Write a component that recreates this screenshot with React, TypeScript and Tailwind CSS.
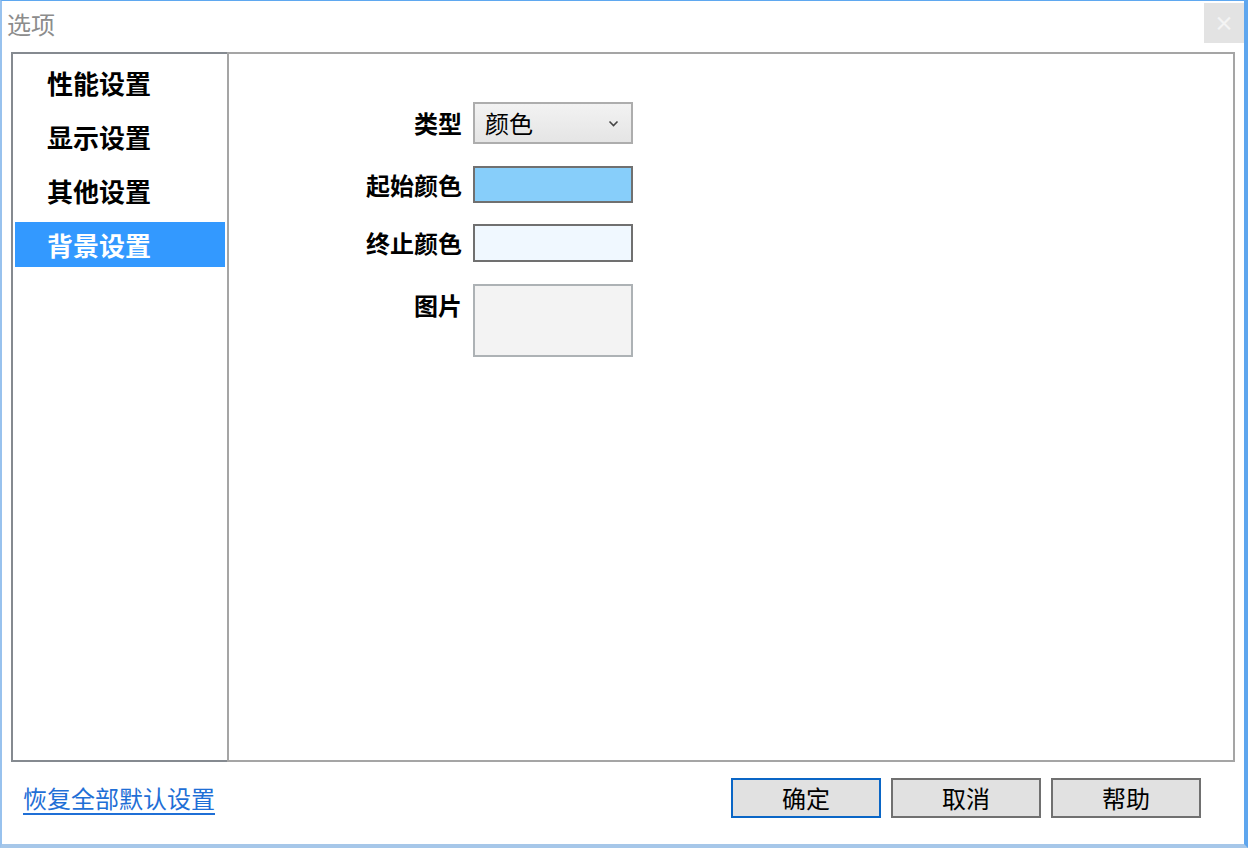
import { useState } from "react";

const font = { fontFamily: '"Noto Sans CJK SC", "Noto Sans", sans-serif' };

const navItems = ["性能设置", "显示设置", "其他设置", "背景设置"];

const Row = ({ label, top, children, alignTop }: { label: string; top: string; children: React.ReactNode; alignTop?: boolean }) => {
  return (
    <div className={`flex ${alignTop ? "items-start" : "items-center"} ${top}`}>
      <div
        className={`w-[233px] text-right text-[24px] font-bold leading-[30px] text-black ${alignTop ? "pt-[6px]" : ""}`}
      >
        {label}
      </div>
      <div className="ml-[11px]">{children}</div>
    </div>
  );
};

export default function App() {
  const [active, setActive] = useState(3);

  return (
    <div
      className="flex h-[848px] w-[1248px] flex-col border-t border-r-4 border-b-4 border-l-2 border-t-[#5fa8f0] border-r-[#5ea6ee] border-b-[#a6c7e9] border-l-[#98c2ee] bg-white"
      style={font}
    >
      {/* title bar */}
      <div className="flex h-[51px] shrink-0 items-start justify-between">
        <div className="pl-[5px] text-[24px] leading-[46px] text-[#8c8c8c]">选项</div>
        <div className="mt-[2px] flex h-[40px] w-[40px] items-center justify-center bg-[#e3e3e3] text-[20px] leading-none font-bold text-[#f4f4f4]">
          ×
        </div>
      </div>

      {/* main panel */}
      <div className="mx-[9px] flex h-[710px] shrink-0">
        <div className="flex w-[216px] flex-col gap-[9px] border-y-2 border-l-2 border-[#858a90] px-[2px] pt-[6px]">
          {navItems.map((item, i) => (
            <div
              key={item}
              onClick={() => setActive(i)}
              className={`flex h-[45px] items-center pl-[32px] text-[26px] font-bold ${
                active === i ? "bg-[#3399ff] text-white" : "text-black"
              }`}
            >
              {item}
            </div>
          ))}
        </div>

        <div className="flex flex-1 flex-col border-2 border-[#a5a5a5] pt-[48px]">
          <Row label="类型" top="">
            <div className="flex h-[42px] w-[160px] items-center justify-between border-2 border-[#adadad] bg-gradient-to-b from-[#f2f2f2] to-[#e5e5e5] pr-[12px] pl-[10px]">
              <span className="text-[24px] leading-none text-black">颜色</span>
              <svg width="11" height="7" viewBox="0 0 11 7" fill="none">
                <path d="M1.5 1.5 L5.5 5.5 L9.5 1.5" stroke="#444" strokeWidth="1.6" />
              </svg>
            </div>
          </Row>
          <Row label="起始颜色" top="mt-[22px]">
            <div className="h-[37px] w-[160px] border-2 border-[#707070] bg-[#87cefa]" />
          </Row>
          <Row label="终止颜色" top="mt-[21px]">
            <div className="h-[38px] w-[160px] border-2 border-[#707070] bg-[#f0f8ff]" />
          </Row>
          <Row label="图片" top="mt-[22px]" alignTop>
            <div className="h-[73px] w-[160px] border-2 border-[#adb2b5] bg-[#f3f3f3]" />
          </Row>
        </div>
      </div>

      {/* footer */}
      <div className="mt-[16px] flex h-[40px] items-center justify-between pr-[43px] pl-[21px]">
        <a className="text-[24px] leading-none text-[#1f6fd6] underline underline-offset-[5px]">恢复全部默认设置</a>
        <div className="flex gap-[10px]">
          <button className="h-[40px] w-[150px] border-2 border-[#0a66c6] bg-[#e1e1e1] text-[24px] leading-none text-black">
            确定
          </button>
          <button className="h-[40px] w-[150px] border-2 border-[#707070] bg-[#e1e1e1] text-[24px] leading-none text-black">
            取消
          </button>
          <button className="h-[40px] w-[150px] border-2 border-[#707070] bg-[#e1e1e1] text-[24px] leading-none text-black">
            帮助
          </button>
        </div>
      </div>
    </div>
  );
}
